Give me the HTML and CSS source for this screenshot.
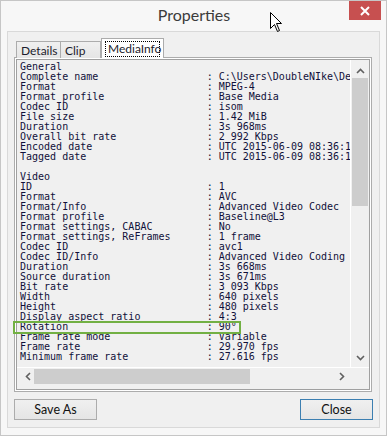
FILE: index.html
```html
<!DOCTYPE html>
<html lang="en">
<head>
    <meta charset="UTF-8">
    <title>Properties</title>
    <link rel="stylesheet" href="styles.css">
</head>
<body>
    <div class="window">
        <div class="titlebar">
            <span></span>
            <div class="title">Properties</div>
            <div class="close-btn">
                <svg width="10" height="10" viewBox="0 0 10 10"><path d="M1 1 L9 9 M9 1 L1 9" stroke="#fff" stroke-width="2"/></svg>
            </div>
        </div>

        <div class="client">
            <div class="tabs">
                <div class="tab tab-details">Details</div>
                <div class="tab tab-clip">Clip</div>
                <div class="tab tab-active"><span class="focus">MediaInfo</span></div>
            </div>

            <div class="tab-page">
                <div class="listbox">
                    <div class="info">
                        <div class="row"><span>General</span></div>
                        <div class="row"><span>Complete name</span><span>: C:\Users\DoubleNIke\De</span></div>
                        <div class="row"><span>Format</span><span>: MPEG-4</span></div>
                        <div class="row"><span>Format profile</span><span>: Base Media</span></div>
                        <div class="row"><span>Codec ID</span><span>: isom</span></div>
                        <div class="row"><span>File size</span><span>: 1.42 MiB</span></div>
                        <div class="row"><span>Duration</span><span>: 3s 968ms</span></div>
                        <div class="row"><span>Overall bit rate</span><span>: 2 992 Kbps</span></div>
                        <div class="row"><span>Encoded date</span><span>: UTC 2015-06-09 08:36:1</span></div>
                        <div class="row"><span>Tagged date</span><span>: UTC 2015-06-09 08:36:1</span></div>
                        <div class="row"></div>
                        <div class="row"><span>Video</span></div>
                        <div class="row"><span>ID</span><span>: 1</span></div>
                        <div class="row"><span>Format</span><span>: AVC</span></div>
                        <div class="row"><span>Format/Info</span><span>: Advanced Video Codec</span></div>
                        <div class="row"><span>Format profile</span><span>: Baseline@L3</span></div>
                        <div class="row"><span>Format settings, CABAC</span><span>: No</span></div>
                        <div class="row"><span>Format settings, ReFrames</span><span>: 1 frame</span></div>
                        <div class="row"><span>Codec ID</span><span>: avc1</span></div>
                        <div class="row"><span>Codec ID/Info</span><span>: Advanced Video Coding</span></div>
                        <div class="row"><span>Duration</span><span>: 3s 668ms</span></div>
                        <div class="row"><span>Source duration</span><span>: 3s 671ms</span></div>
                        <div class="row"><span>Bit rate</span><span>: 3 093 Kbps</span></div>
                        <div class="row"><span>Width</span><span>: 640 pixels</span></div>
                        <div class="row"><span>Height</span><span>: 480 pixels</span></div>
                        <div class="row"><span>Display aspect ratio</span><span>: 4:3</span></div>
                        <div class="row"><span>Rotation</span><span>: 90°</span></div>
                        <div class="row"><span>Frame rate mode</span><span>: Variable</span></div>
                        <div class="row"><span>Frame rate</span><span>: 29.970 fps</span></div>
                        <div class="row"><span>Minimum frame rate</span><span>: 27.616 fps</span></div>
                    </div>
                    <div class="vscroll">
                        <svg class="arrow" width="9" height="6" viewBox="0 0 9 6"><path d="M1 5 L4.5 1.5 L8 5" fill="none" stroke="#606060" stroke-width="1.6"/></svg>
                        <div class="vthumb"></div>
                        <div class="spacer"></div>
                        <svg class="arrow" width="9" height="6" viewBox="0 0 9 6"><path d="M1 1 L4.5 4.5 L8 1" fill="none" stroke="#606060" stroke-width="1.6"/></svg>
                    </div>
                    <div class="hscroll">
                        <svg class="arrow" width="6" height="9" viewBox="0 0 6 9"><path d="M5 1 L1.5 4.5 L5 8" fill="none" stroke="#606060" stroke-width="1.6"/></svg>
                        <div class="hthumb"></div>
                        <div class="spacer"></div>
                        <svg class="arrow" width="6" height="9" viewBox="0 0 6 9"><path d="M1 1 L4.5 4.5 L1 8" fill="none" stroke="#606060" stroke-width="1.6"/></svg>
                    </div>
                    <div class="corner"></div>
                </div>
            </div>

            <div class="buttons">
                <button class="btn btn-save">Save As</button>
                <button class="btn btn-close">Close</button>
            </div>
        </div>
    </div>

    <div class="highlight"></div>
    <svg class="cursor" width="13" height="21" viewBox="0 0 13 21">
        <path d="M0.5 0.5 L0.5 16.5 L4.5 12.5 L7.5 19.5 L9.5 18.5 L6.5 11.5 L11.5 11.5 Z" fill="#fff" stroke="#000" stroke-width="1"/>
    </svg>
</body>
</html>
```

FILE: styles.css
```css
body { margin: 0; position: relative; width: 387px; height: 436px; overflow: hidden; background: #fff; font-family: 'Lato', 'Liberation Sans', sans-serif; }

.window { box-sizing: border-box; width: 387px; height: 436px; border: 1px solid #c6c6c6; background: #f7f7f7; padding: 0 6px 0 6px; }

.titlebar { display: grid; grid-template-columns: 1fr auto 1fr; height: 30px; margin: 0 -1px 0 0; }
.title { font-size: 16px; color: #3b3b3b; padding-top: 4px; }
.close-btn { justify-self: end; align-self: start; width: 32px; height: 19px; background: #c75050; display: flex; align-items: center; justify-content: center; }

.client { box-sizing: border-box; height: 397px; border: 1px solid #d9d9d9; background: #f0f0f0; padding: 6px 7px 0 6px; }

.tabs { display: flex; align-items: flex-end; height: 20px; padding-left: 2px; margin-bottom: -1px; position: relative; z-index: 1; }
.tab { box-sizing: border-box; height: 17px; border: 1px solid #acacac; border-bottom: none; background: linear-gradient(#f0f0f0, #e5e5e5); font-size: 12px; color: #1c1c2c; padding: 1px 0 0 4px; }
.tab-details { width: 45px; }
.tab-clip { width: 40px; border-left: none; }
.tab-active { width: 63px; height: 20px; background: #fff; padding: 2px 3px 0 3px; }
.focus { display: block; border: 1px dotted #000; padding: 0 2px; line-height: 14px; }

.tab-page { box-sizing: border-box; height: 335px; border: 1px solid #acacac; background: #fff; padding: 1px; }
.listbox { box-sizing: border-box; height: 331px; border: 1px solid #a0a0a0; background: #f0f0f0; padding-bottom: 4px; display: grid; grid-template-columns: 1fr 18px; grid-template-rows: 1fr 17px; }

.info { font-family: 'DejaVu Sans Mono', monospace; font-size: 10px; line-height: 10px; color: #10103a; padding: 2px 0 0 3px; overflow: hidden; border-right: 1px solid #fff; border-bottom: 1px solid #fff; }
.row { display: grid; grid-template-columns: 31ch auto; height: 10px; white-space: pre; }

.vscroll { display: flex; flex-direction: column; align-items: center; background: #f0f0f0; padding: 8px 0 6px; border-bottom: 1px solid #fff; }
.vthumb { width: 16px; height: 128px; margin-top: 4px; background: #cdcdcd; }
.hscroll { display: flex; align-items: center; background: #f0f0f0; padding: 0 6px 0 8px; }
.hthumb { width: 216px; height: 15px; margin-left: 3px; background: #cdcdcd; }
.spacer { flex: 1; }
.arrow { display: block; }
.corner { background: #f0f0f0; }

.buttons { display: flex; justify-content: space-between; margin-top: 7px; }
.btn { box-sizing: border-box; height: 21px; border: 1px solid #acacac; background: linear-gradient(#f0f0f0, #e5e5e5); font-family: 'Lato', 'Liberation Sans', sans-serif; font-size: 12.5px; color: #111; padding: 0; }
.btn-save { width: 83px; }
.btn-close { width: 73px; border-color: #3c7fb1; margin-right: -1px; }

.highlight { position: absolute; left: 13px; top: 321px; width: 228px; height: 13px; border: 2px solid #72b043; box-sizing: border-box; }
.cursor { position: absolute; left: 270px; top: 12px; }
```
